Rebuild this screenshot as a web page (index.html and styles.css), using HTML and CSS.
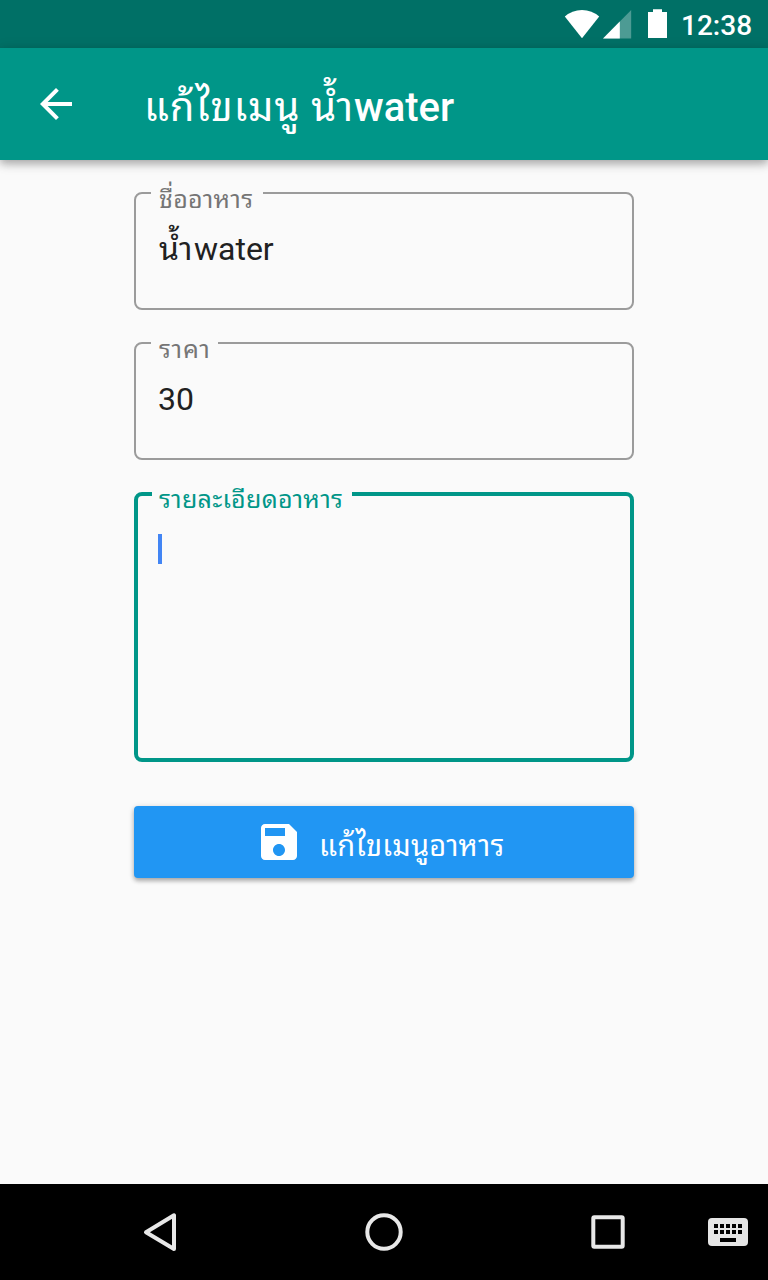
FILE: index.html
```
<!DOCTYPE html>
<html lang="th">
<head>
<meta charset="utf-8">
<title>แก้ไขเมนู</title>
<link rel="stylesheet" href="styles.css">
</head>
<body>
<div class="status-bar">
  <svg class="status-icons" width="104" height="32" viewBox="564 8 104 32" fill="#fff">
    <path d="M582 38.2 564.8 16.6Q572 10 582 10T599.2 16.6Z"/>
    <path d="M603 38.4 631.2 10V38.4Z" opacity=".3"/>
    <path d="M603 38.4 619.8 21.5V38.4Z"/>
    <path d="M648 12h5V9.2h9V12h5v26h-19z"/>
  </svg>
  <span class="clock">12:38</span>
</div>
<header class="app-bar">
  <svg class="back" width="48" height="48" viewBox="0 0 24 24" fill="#fff"><path d="M20 11H7.83l5.59-5.59L12 4l-8 8 8 8 1.41-1.41L7.83 13H20v-2z"/></svg>
  <h1 class="title"><span class="thai">แก้ไขเมนู น้ำ</span>water</h1>
</header>
<main class="form">
  <fieldset class="field">
    <legend class="notch notch-name"><span class="label">ชื่ออาหาร</span></legend>
    <div class="value"><span class="thai-value">น้ำ</span>water</div>
  </fieldset>
  <fieldset class="field">
    <legend class="notch notch-price"><span class="label label-price">ราคา</span></legend>
    <div class="value">30</div>
  </fieldset>
  <fieldset class="field focused">
    <legend class="notch notch-detail"><span class="label">รายละเอียดอาหาร</span></legend>
    <div class="caret"></div>
  </fieldset>
  <button class="save">
    <svg width="48" height="48" viewBox="0 0 24 24" fill="#fff"><path d="M17 3H5c-1.11 0-2 .9-2 2v14c0 1.1.89 2 2 2h14c1.1 0 2-.9 2-2V7l-4-4zm-5 16c-1.66 0-3-1.34-3-3s1.34-3 3-3 3 1.34 3 3-1.34 3-3 3zm3-10H5V5h10v4z"/></svg>
    <span class="save-text">แก้ไขเมนูอาหาร</span>
  </button>
</main>
<nav class="nav-bar">
  <svg width="48" height="48" viewBox="136 1208 48 48" fill="none" stroke="#e8e8e8" stroke-width="4" stroke-linejoin="round"><path d="M174 1215.3V1249L146 1232.2Z"/></svg>
  <svg width="48" height="48" viewBox="360 1208 48 48" fill="none" stroke="#e8e8e8" stroke-width="4"><circle cx="384" cy="1232" r="16.7"/></svg>
  <svg width="48" height="48" viewBox="584 1208 48 48" fill="none" stroke="#e8e8e8" stroke-width="4"><rect x="593.3" y="1217.3" width="29.4" height="29.4" rx="1"/></svg>
  <svg class="keyboard" width="48" height="48" viewBox="704 1208 48 48"><rect x="708" y="1218" width="40" height="28" rx="4" fill="#e5e5e5"/><path d="M714 1224h4v4h-4zm6 0h4v4h-4zm6 0h4v4h-4zm6 0h4v4h-4zm6 0h4v4h-4zM714 1230h4v4h-4zm6 0h4v4h-4zm6 0h4v4h-4zm6 0h4v4h-4zm6 0h4v4h-4zM720 1238h16v4h-16z"/></svg>
</nav>
</body>
</html>
```
FILE: styles.css
```
* { box-sizing: border-box; }
body {
  margin: 0;
  width: 768px;
  height: 1280px;
  display: flex;
  flex-direction: column;
  background: #fafafa;
  font-family: Roboto, "Noto Sans Thai Looped", "Noto Looped Thai UI", "Noto Looped Thai", "Droid Sans Thai", Loma, Waree, Garuda, "Noto Sans", sans-serif;
  overflow: hidden;
}
svg { display: block; flex: none; }
.status-bar {
  height: 48px;
  flex: none;
  display: flex;
  justify-content: flex-end;
  align-items: center;
  gap: 13px;
  padding-right: 16px;
  background: #007066;
  color: #fff;
}
.clock { width: 71px; font-size: 28px; font-weight: 500; line-height: 32px; padding-top: 3px; white-space: nowrap; }
.app-bar {
  height: 112px;
  flex: none;
  display: flex;
  align-items: center;
  padding-left: 32px;
  gap: 64px;
  background: #009688;
  color: #fff;
  box-shadow: 0 4px 8px rgba(0, 0, 0, .26), 0 2px 14px rgba(0, 0, 0, .12);
}
.title { margin: 0; font-size: 40px; font-weight: 500; line-height: 48px; padding-top: 7px; white-space: nowrap; }
.thai { font-weight: 400; letter-spacing: .95px; }
.form {
  flex: 1;
  width: 500px;
  margin: 0 auto;
  padding-top: 32px;
  display: flex;
  flex-direction: column;
  gap: 32px;
}
.field {
  height: 118px;
  flex: none;
  margin: 0;
  min-width: 0;
  padding: 0 16px 0 15px;
  border: 2px solid #9b9b9b;
  border-radius: 8px;
}
.notch { height: 2px; padding: 0 0 0 8px; }
.notch-name { width: 112px; }
.notch-price { width: 67px; }
.notch-detail { width: 200px; padding-left: 7px; }
.label { display: block; font-size: 25px; line-height: 30px; margin-top: -7px; letter-spacing: .3px; color: #757575; white-space: nowrap; }
.label-price { letter-spacing: .8px; }
.value { padding: 36px 0 0 7px; font-size: 32px; line-height: 38px; color: #212121; white-space: nowrap; }
.thai-value { letter-spacing: 1.5px; margin-left: 1px; }
.focused { height: 270px; border: 4px solid #009688; padding-left: 14px; }
.focused .notch { height: 4px; }
.focused .label { color: #009688; }
.caret { width: 4px; height: 30px; margin: 38px 0 0 6px; background: #4285f4; }
.save {
  height: 72px;
  flex: none;
  margin: 12px 0 0;
  padding: 0 0 0 121px;
  display: flex;
  align-items: center;
  gap: 16px;
  border: 0;
  border-radius: 4px;
  background: #2196f3;
  color: #fff;
  font-family: inherit;
  font-size: 29px;
  line-height: 36px;
  box-shadow: 0 3px 4px rgba(0, 0, 0, .26), 0 1px 6px rgba(0, 0, 0, .14);
}
.save-text { padding-top: 7px; letter-spacing: .25px; white-space: nowrap; }
.nav-bar {
  height: 96px;
  flex: none;
  display: flex;
  align-items: center;
  gap: 176px;
  padding-left: 136px;
  background: #000;
}
.keyboard { margin-left: -104px; }
```
